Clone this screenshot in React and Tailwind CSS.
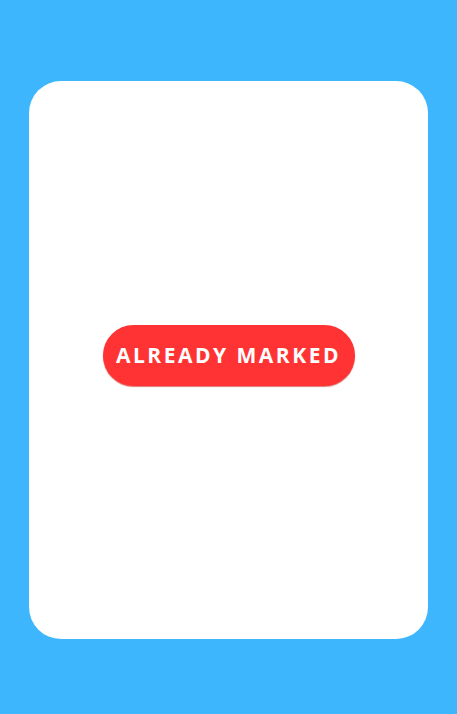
export default function App() {
  return (
    <div className="min-h-[714px] w-full bg-[#3db6fe] pt-[81px] pl-[29px]">
      <div className="flex h-[558px] w-[399px] items-center justify-center rounded-[32px] bg-white">
        <button className="mb-[9px] flex h-[61px] w-[252px] items-center justify-center rounded-full bg-[#ff3333] shadow-[0_1px_1px_rgba(200,30,30,0.6)]">
          <span className="font-['Open_Sans',sans-serif] text-[21px] font-bold tracking-[2.5px] text-white">
            ALREADY MARKED
          </span>
        </button>
      </div>
    </div>
  );
}
